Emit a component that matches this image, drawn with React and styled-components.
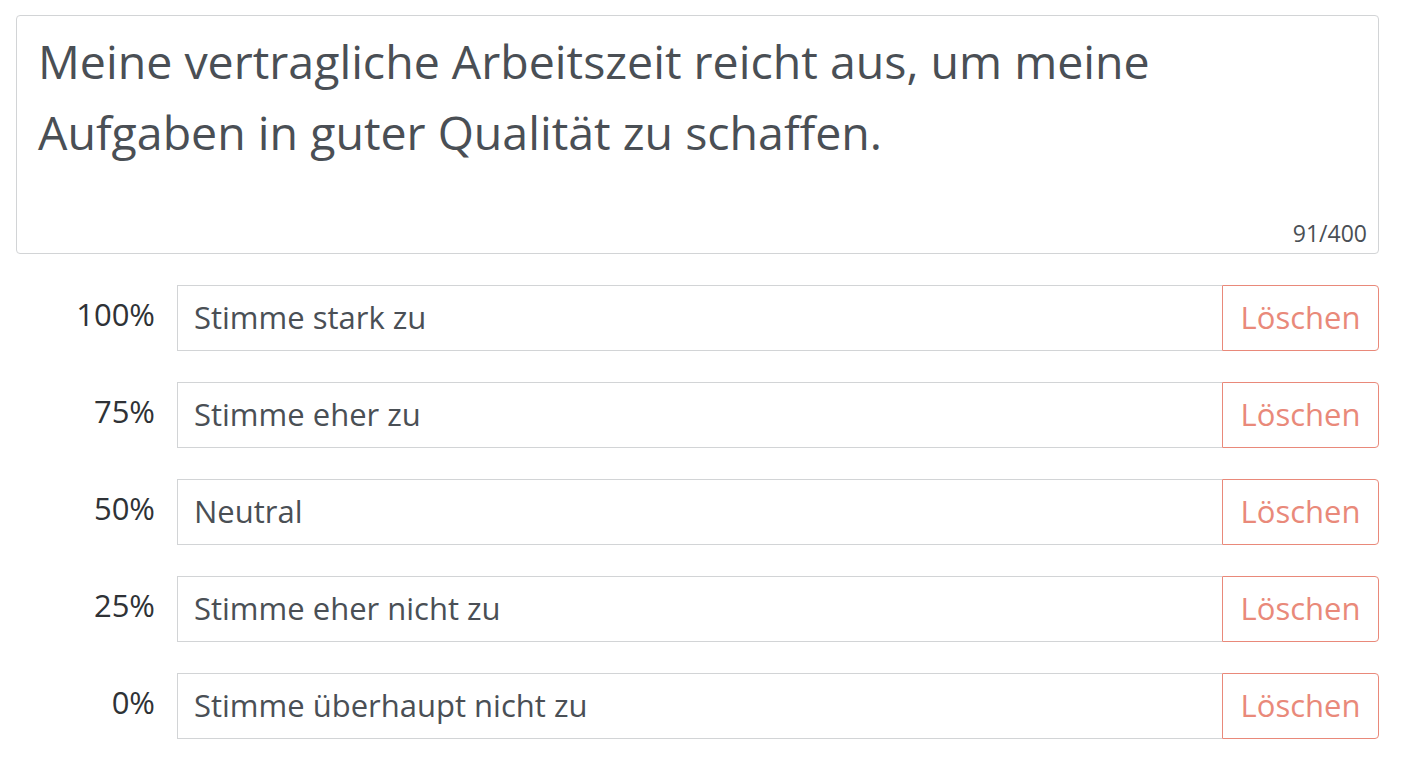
import React from 'react';
import styled, { createGlobalStyle } from 'styled-components';

const GlobalStyle = createGlobalStyle`
  body {
    margin: 0;
    background: #fff;
    font-family: "Open Sans", Lato, sans-serif;
  }
`;

const Page = styled.div`
  padding: 15px 23px 0 16px;
  display: flex;
  flex-direction: column;
`;

const QuestionBox = styled.div`
  position: relative;
  height: 239px;
  box-sizing: border-box;
  border: 1px solid #d2d4d6;
  border-radius: 4px;
  padding: 10px 21px 0 21px;
  color: #4a4f55;
  font-size: 46.5px;
  line-height: 71px;
`;

const Counter = styled.div`
  position: absolute;
  right: 11px;
  bottom: 8px;
  font-size: 23px;
  line-height: 24px;
  color: #4a4f55;
`;

const Options = styled.div`
  margin-top: 31px;
  display: flex;
  flex-direction: column;
  gap: 31px;
`;

const Row = styled.div`
  display: flex;
  align-items: center;
  height: 66px;
`;

const Percent = styled.div`
  width: 139px;
  padding-right: 22px;
  text-align: right;
  font-size: 31px;
  color: #2f3236;
  margin-bottom: 8px;
`;

const AnswerField = styled.div`
  flex: 1;
  height: 100%;
  box-sizing: border-box;
  border: 1px solid #d2d4d6;
  border-right: none;
  display: flex;
  align-items: center;
  padding: 0 0 3px 16px;
  font-size: 31px;
  color: #4a4f55;
`;

const DeleteButton = styled.button`
  width: 157px;
  height: 100%;
  box-sizing: border-box;
  border: 1.5px solid #e9897a;
  border-radius: 0 4px 4px 0;
  background: #fff;
  color: #e9897a;
  font-family: inherit;
  font-size: 31px;
  padding: 0 0 3px 0;
  cursor: pointer;
`;

const answers = [
  { pct: '100%', text: 'Stimme stark zu' },
  { pct: '75%', text: 'Stimme eher zu' },
  { pct: '50%', text: 'Neutral' },
  { pct: '25%', text: 'Stimme eher nicht zu' },
  { pct: '0%', text: 'Stimme überhaupt nicht zu' },
];

export default function App() {
  return (
    <>
      <GlobalStyle />
      <Page>
        <QuestionBox>
          Meine vertragliche Arbeitszeit reicht aus, um meine
          <br />
          Aufgaben in guter Qualität zu schaffen.
          <Counter>91/400</Counter>
        </QuestionBox>
        <Options>
          {answers.map((a) => (
            <Row key={a.pct}>
              <Percent>{a.pct}</Percent>
              <AnswerField>{a.text}</AnswerField>
              <DeleteButton>Löschen</DeleteButton>
            </Row>
          ))}
        </Options>
      </Page>
    </>
  );
}
